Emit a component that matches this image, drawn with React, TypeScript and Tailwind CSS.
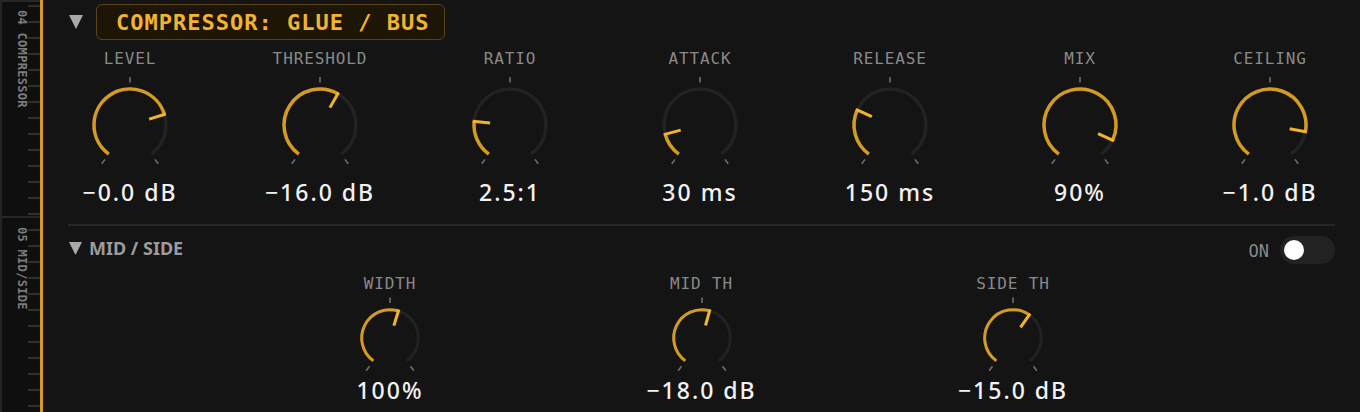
import React from 'react';

const MONO = "font-['DejaVu_Sans_Mono','Liberation_Mono',monospace]";
const SANS = "font-['Noto_Sans','Open_Sans',sans-serif]";

interface KnobSpec {
    label: string;
    value: string;
    frac: number; // 0-1 position on the dial
}

const COMP_KNOBS: KnobSpec[] = [
    { label: 'LEVEL', value: '−0.0 dB', frac: 0.753 },
    { label: 'THRESHOLD', value: '−16.0 dB', frac: 0.603 },
    { label: 'RATIO', value: '2.5:1', frac: 0.207 },
    { label: 'ATTACK', value: '30 ms', frac: 0.136 },
    { label: 'RELEASE', value: '150 ms', frac: 0.273 },
    { label: 'MIX', value: '90%', frac: 0.9 },
    { label: 'CEILING', value: '−1.0 dB', frac: 0.85 },
];

const MS_KNOBS: KnobSpec[] = [
    { label: 'WIDTH', value: '100%', frac: 0.56 },
    { label: 'MID TH', value: '−18.0 dB', frac: 0.554 },
    { label: 'SIDE TH', value: '−15.0 dB', frac: 0.622 },
];

const SWEEP = 144; // degrees either side of 12 o'clock

const pt = (c: number, r: number, deg: number) => {
    const a = (deg * Math.PI) / 180;
    return `${(c + r * Math.sin(a)).toFixed(2)} ${(c - r * Math.cos(a)).toFixed(2)}`;
};

const arc = (c: number, r: number, a0: number, a1: number) =>
    `M ${pt(c, r, a0)} A ${r} ${r} 0 ${a1 - a0 > 180 ? 1 : 0} 1 ${pt(c, r, a1)}`;

const DIALS = {
    big: { box: 96, r: 36, sw: 3.5, tickIn: 42.5, tickOut: 48, indIn: 20, indOut: 37.5 },
    small: { box: 82, r: 28.3, sw: 3, tickIn: 35, tickOut: 40.5, indIn: 13, indOut: 29.8 },
};

function Dial({ frac, size }: { frac: number; size: 'big' | 'small' }) {
    const d = DIALS[size];
    const c = d.box / 2;
    const v = -SWEEP + frac * SWEEP * 2;
    return (
        <svg width={d.box} height={d.box} viewBox={`0 0 ${d.box} ${d.box}`}>
            {[0, -SWEEP, SWEEP].map(a => (
                <path key={a} d={`M ${pt(c, d.tickIn, a)} L ${pt(c, d.tickOut, a)}`} stroke="#6f6f6f" strokeWidth={1.6} />
            ))}
            <path d={arc(c, d.r, -SWEEP, SWEEP)} fill="none" stroke="#222222" strokeWidth={d.sw} />
            <path d={arc(c, d.r, -SWEEP, v)} fill="none" stroke="#d39b20" strokeWidth={d.sw} />
            <path d={`M ${pt(c, d.indIn, v)} L ${pt(c, d.indOut, v)}`} stroke="#f4b42a" strokeWidth={3} />
        </svg>
    );
}

function Knob({ spec, size }: { spec: KnobSpec; size: 'big' | 'small' }) {
    return (
        <div className="flex w-[124px] flex-col items-center">
            <span className={`${MONO} text-[16px] leading-[20px] tracking-[0.9px] text-[#8a8a8a] whitespace-nowrap`}>{spec.label}</span>
            <div className={size === 'big' ? 'mt-[8px]' : 'mt-[3px]'}>
                <Dial frac={spec.frac} size={size} />
            </div>
            <span className={`${SANS} ${size === 'big' ? 'mt-[5px]' : 'mt-[-3px]'} text-[23px] leading-[28px] font-medium tracking-[2px] text-[#f2f2f2] whitespace-nowrap`}>
                {spec.value}
            </span>
        </div>
    );
}

function Caret({ className }: { className?: string }) {
    return (
        <svg width="14" height="14" viewBox="0 0 14 14" className={className}>
            <polygon points="0,0 14,0 7,14" fill="#a9a9a9" />
        </svg>
    );
}

function SideSection({ label, ticks, tickTop, textTop, grow }: { label: string; ticks: number; tickTop: string; textTop: string; grow?: boolean }) {
    return (
        <div className={`flex border-t-2 border-[#262626] overflow-hidden ${grow ? 'flex-1' : 'h-[216px]'}`}>
            <div className={`w-[26px] ${textTop}`}>
                <span className={`${MONO} ml-[13px] block text-[12px] font-bold leading-[13px] tracking-[0.3px] text-[#7c7c7c] [writing-mode:vertical-rl] whitespace-nowrap`}>
                    {label}
                </span>
            </div>
            <div className={`flex w-[12px] flex-col gap-[14px] ${tickTop}`}>
                {Array.from({ length: ticks }).map((_, i) => (
                    <div key={i} className="h-[2px] w-[12px] shrink-0 bg-[#2e2e2e]" />
                ))}
            </div>
        </div>
    );
}

export default function App() {
    return (
        <div className="flex h-[412px] w-[1360px] overflow-hidden bg-[#141414]">
            {/* Section rail */}
            <aside className="flex w-[43px] shrink-0 flex-col border-l-2 border-r-[3px] border-l-[#242424] border-r-[#d39b20] bg-[#0f0f0f]">
                <SideSection label="04 COMPRESSOR" ticks={14} tickTop="pt-[3px]" textTop="pt-[8px]" />
                <SideSection label="05 MID/SIDE" ticks={12} tickTop="pt-[11px]" textTop="pt-[9px]" grow />
            </aside>

            <main className="flex min-w-0 flex-1 flex-col px-[25px] pt-[4px]">
                {/* Compressor header */}
                <div className="flex h-[36px] items-center gap-[13px] pl-px">
                    <Caret />
                    <div className={`${MONO} flex h-[36px] w-[349px] items-center rounded-[6px] border-[1.5px] border-[#5a4518] bg-[#1d1506] pl-[19px] text-[22px] font-bold tracking-[1px] text-[#f2b42c] whitespace-nowrap`}>
                        COMPRESSOR: GLUE / BUS
                    </div>
                </div>

                <div className="mt-[9px] flex justify-between pr-[3px]">
                    {COMP_KNOBS.map(k => (
                        <Knob key={k.label} spec={k} size="big" />
                    ))}
                </div>

                <div className="mt-[18px] h-[2px] bg-[#262626]" />

                {/* Mid / Side */}
                <div className="mt-[10px] flex items-start justify-between">
                    <div className={`${SANS} mt-[1px] flex items-center gap-[7px] pl-px text-[18px] font-bold leading-[22px] text-[#9c9c9c]`}>
                        <Caret className="h-[13px] w-[13px]" />
                        <span>MID / SIDE</span>
                    </div>
                    <div className="flex items-center gap-[11px]">
                        <span className={`${MONO} mt-px text-[17px] leading-[20px] text-[#8a8a8a]`}>ON</span>
                        <div className="flex h-[28px] w-[55px] items-center rounded-full bg-[#222222] px-[4px]">
                            <div className="h-[20px] w-[20px] rounded-full bg-white" />
                        </div>
                    </div>
                </div>

                <div className="mt-[10px] flex gap-[187.5px] pl-[260px]">
                    {MS_KNOBS.map(k => (
                        <Knob key={k.label} spec={k} size="small" />
                    ))}
                </div>
            </main>
        </div>
    );
}
